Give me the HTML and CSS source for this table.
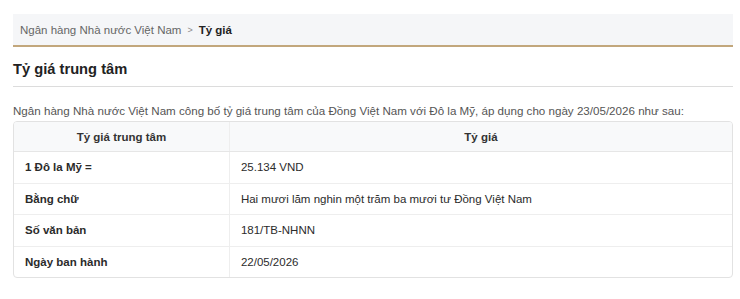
FILE: index.html
```html
<!DOCTYPE html>
<html lang="vi">
<head>
<meta charset="utf-8">
<title>Tỷ giá</title>
<link rel="stylesheet" href="styles.css">
</head>
<body>
<div class="page">
  <nav class="crumbs">
    <span class="crumb">Ngân hàng Nhà nước Việt Nam</span>
    <span class="sep">&gt;</span>
    <span class="crumb current">Tỷ giá</span>
  </nav>
  <h1 class="title">Tỷ giá trung tâm</h1>
  <p class="desc">Ngân hàng Nhà nước Việt Nam công bố tỷ giá trung tâm của Đồng Việt Nam với Đô la Mỹ, áp dụng cho ngày 23/05/2026 như sau:</p>
  <div class="table-wrap">
    <table class="rates">
      <thead>
        <tr><th class="c1">Tỷ giá trung tâm</th><th>Tỷ giá</th></tr>
      </thead>
      <tbody>
        <tr><td class="c1 label">1 Đô la Mỹ =</td><td>25.134 VND</td></tr>
        <tr><td class="c1 label">Bằng chữ</td><td>Hai mươi lăm nghin một trăm ba mươi tư Đồng Việt Nam</td></tr>
        <tr><td class="c1 label">Số văn bản</td><td>181/TB-NHNN</td></tr>
        <tr><td class="c1 label">Ngày ban hành</td><td>22/05/2026</td></tr>
      </tbody>
    </table>
  </div>
</div>
</body>
</html>
```
FILE: styles.css
```css
html, body {
  margin: 0;
  padding: 0;
  background: #fff;
}
body {
  font-family: "Liberation Sans", Arial, sans-serif;
  color: #333;
}
.page {
  padding: 14px 7px 0 13px;
}
.crumbs {
  display: flex;
  align-items: center;
  height: 31px;
  padding: 0 7px;
  background: #f5f6f8;
  border-bottom: 2px solid #c2a77c;
  font-size: 11.5px;
}
.crumb {
  color: #666;
}
.sep {
  color: #888;
  font-size: 9px;
  margin: 0 6px 0 6px;
}
.crumb.current {
  color: #222;
  font-weight: bold;
}
.title {
  margin: 12px 0 0;
  padding-bottom: 7px;
  font-size: 14.7px;
  line-height: 20px;
  font-weight: bold;
  color: #222;
  border-bottom: 1px solid #dcdcdc;
}
.desc {
  margin: 15px 0 1px;
  font-size: 11.6px;
  line-height: 18px;
  color: #555;
}
.table-wrap {
  border: 1px solid #e2e2e2;
  border-radius: 4px;
  overflow: hidden;
}
.rates {
  width: 100%;
  border-collapse: collapse;
  font-size: 11.5px;
}
.rates th {
  background: #f8f9fa;
  font-weight: bold;
  color: #333;
  text-align: center;
  height: 29px;
  padding: 0 11px;
  border-bottom: 1px solid #e6e6e6;
}
.rates td {
  height: 30.5px;
  padding: 0 11px;
  color: #2b2b2b;
  border-top: 1px solid #eeeeee;
}
.rates tbody tr:first-child td {
  border-top: none;
}
.rates .c1 {
  width: 30%;
  border-right: 1px solid #eeeeee;
  box-sizing: border-box;
}
.rates .label {
  font-weight: bold;
}
```
